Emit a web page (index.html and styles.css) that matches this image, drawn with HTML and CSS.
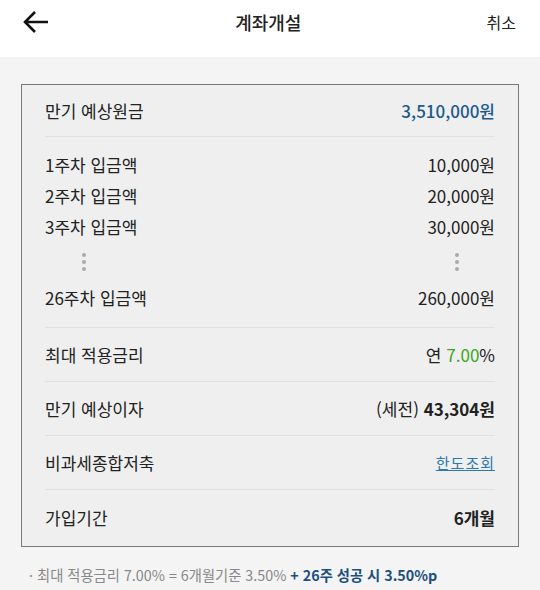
FILE: index.html
```html
<!DOCTYPE html>
<html lang="ko">
<head>
<meta charset="utf-8">
<link rel="stylesheet" href="styles.css">
</head>
<body>
<header class="topbar">
  <span class="back">
    <svg width="28" height="24" viewBox="0 0 28 24"><path d="M26 12H3M13 2L3 12l10 10" fill="none" stroke="#111" stroke-width="2.6"/></svg>
  </span>
  <h1 class="title">계좌개설</h1>
  <span class="cancel">취소</span>
</header>
<main class="content">
  <section class="card">
    <div class="row row-first">
      <span>만기 예상원금</span>
      <span class="blue">3,510,000원</span>
    </div>
    <div class="group">
      <div class="line"><span>1주차 입금액</span><span>10,000원</span></div>
      <div class="line"><span>2주차 입금액</span><span>20,000원</span></div>
      <div class="line"><span>3주차 입금액</span><span>30,000원</span></div>
      <div class="dots-row"><span class="dots"><i></i><i></i><i></i></span><span class="dots"><i></i><i></i><i></i></span></div>
      <div class="line"><span>26주차 입금액</span><span>260,000원</span></div>
    </div>
    <div class="row">
      <span>최대 적용금리</span>
      <span>연 <span class="green">7.00</span>%</span>
    </div>
    <div class="row">
      <span>만기 예상이자</span>
      <span>(세전) <b class="bold">43,304원</b></span>
    </div>
    <div class="row">
      <span>비과세종합저축</span>
      <a class="link">한도조회</a>
    </div>
    <div class="row row-last">
      <span>가입기간</span>
      <b class="bold">6개월</b>
    </div>
  </section>
  <p class="note">· 최대 적용금리 7.00% = 6개월기준 3.50% <b class="note-strong">+ 26주 성공 시 3.50%p</b></p>
</main>
</body>
</html>
```
FILE: styles.css
```css
* { box-sizing: border-box; }
html, body { margin: 0; padding: 0; }
body {
  width: 540px;
  height: 590px;
  background: #f4f4f4;
  font-family: "Noto Sans CJK KR", "Noto Sans", sans-serif;
  color: #222;
  overflow: hidden;
}
.topbar {
  height: 57px;
  background: #fff;
  display: flex;
  align-items: center;
  justify-content: space-between;
  padding: 0 24px 13px 22px;
}
.back { display: flex; width: 28px; }
.title {
  margin: 0;
  font-size: 18px;
  font-weight: 500;
}
.cancel { font-size: 16px; color: #222; }
.content { padding: 27px 21px 0 21px; }
.card {
  border: 1px solid #7a7a7a;
  background: #efefef;
  padding: 0 23px;
}
.row {
  display: flex;
  justify-content: space-between;
  align-items: center;
  height: 54px;
  border-bottom: 1px solid #e0e0e0;
  font-size: 17px;
}
.row-first { height: 52px; }
.row-last { border-bottom: none; height: 56px; padding-bottom: 2px; }
.group {
  padding: 12px 0 14px;
  border-bottom: 1px solid #e0e0e0;
  font-size: 17px;
}
.line {
  display: flex;
  justify-content: space-between;
  height: 31px;
  align-items: center;
}
.dots-row {
  display: flex;
  justify-content: space-between;
  padding: 0 36px 0 37px;
  height: 40px;
  align-items: center;
}
.dots { display: flex; flex-direction: column; gap: 3px; }
.dots i { display: block; width: 4px; height: 4px; border-radius: 50%; background: #aaa; }
.blue { color: #1d5a8c; font-weight: 500; }
.green { color: #3aa61c; }
.bold { font-weight: 700; }
.link { color: #2b78ab; text-decoration: underline; font-size: 15px; letter-spacing: 1px; }
.note {
  margin: 17px 0 0 8px;
  font-size: 14.3px;
  color: #888;
}
.note-strong { color: #1c4f7f; font-weight: 700; }
```
